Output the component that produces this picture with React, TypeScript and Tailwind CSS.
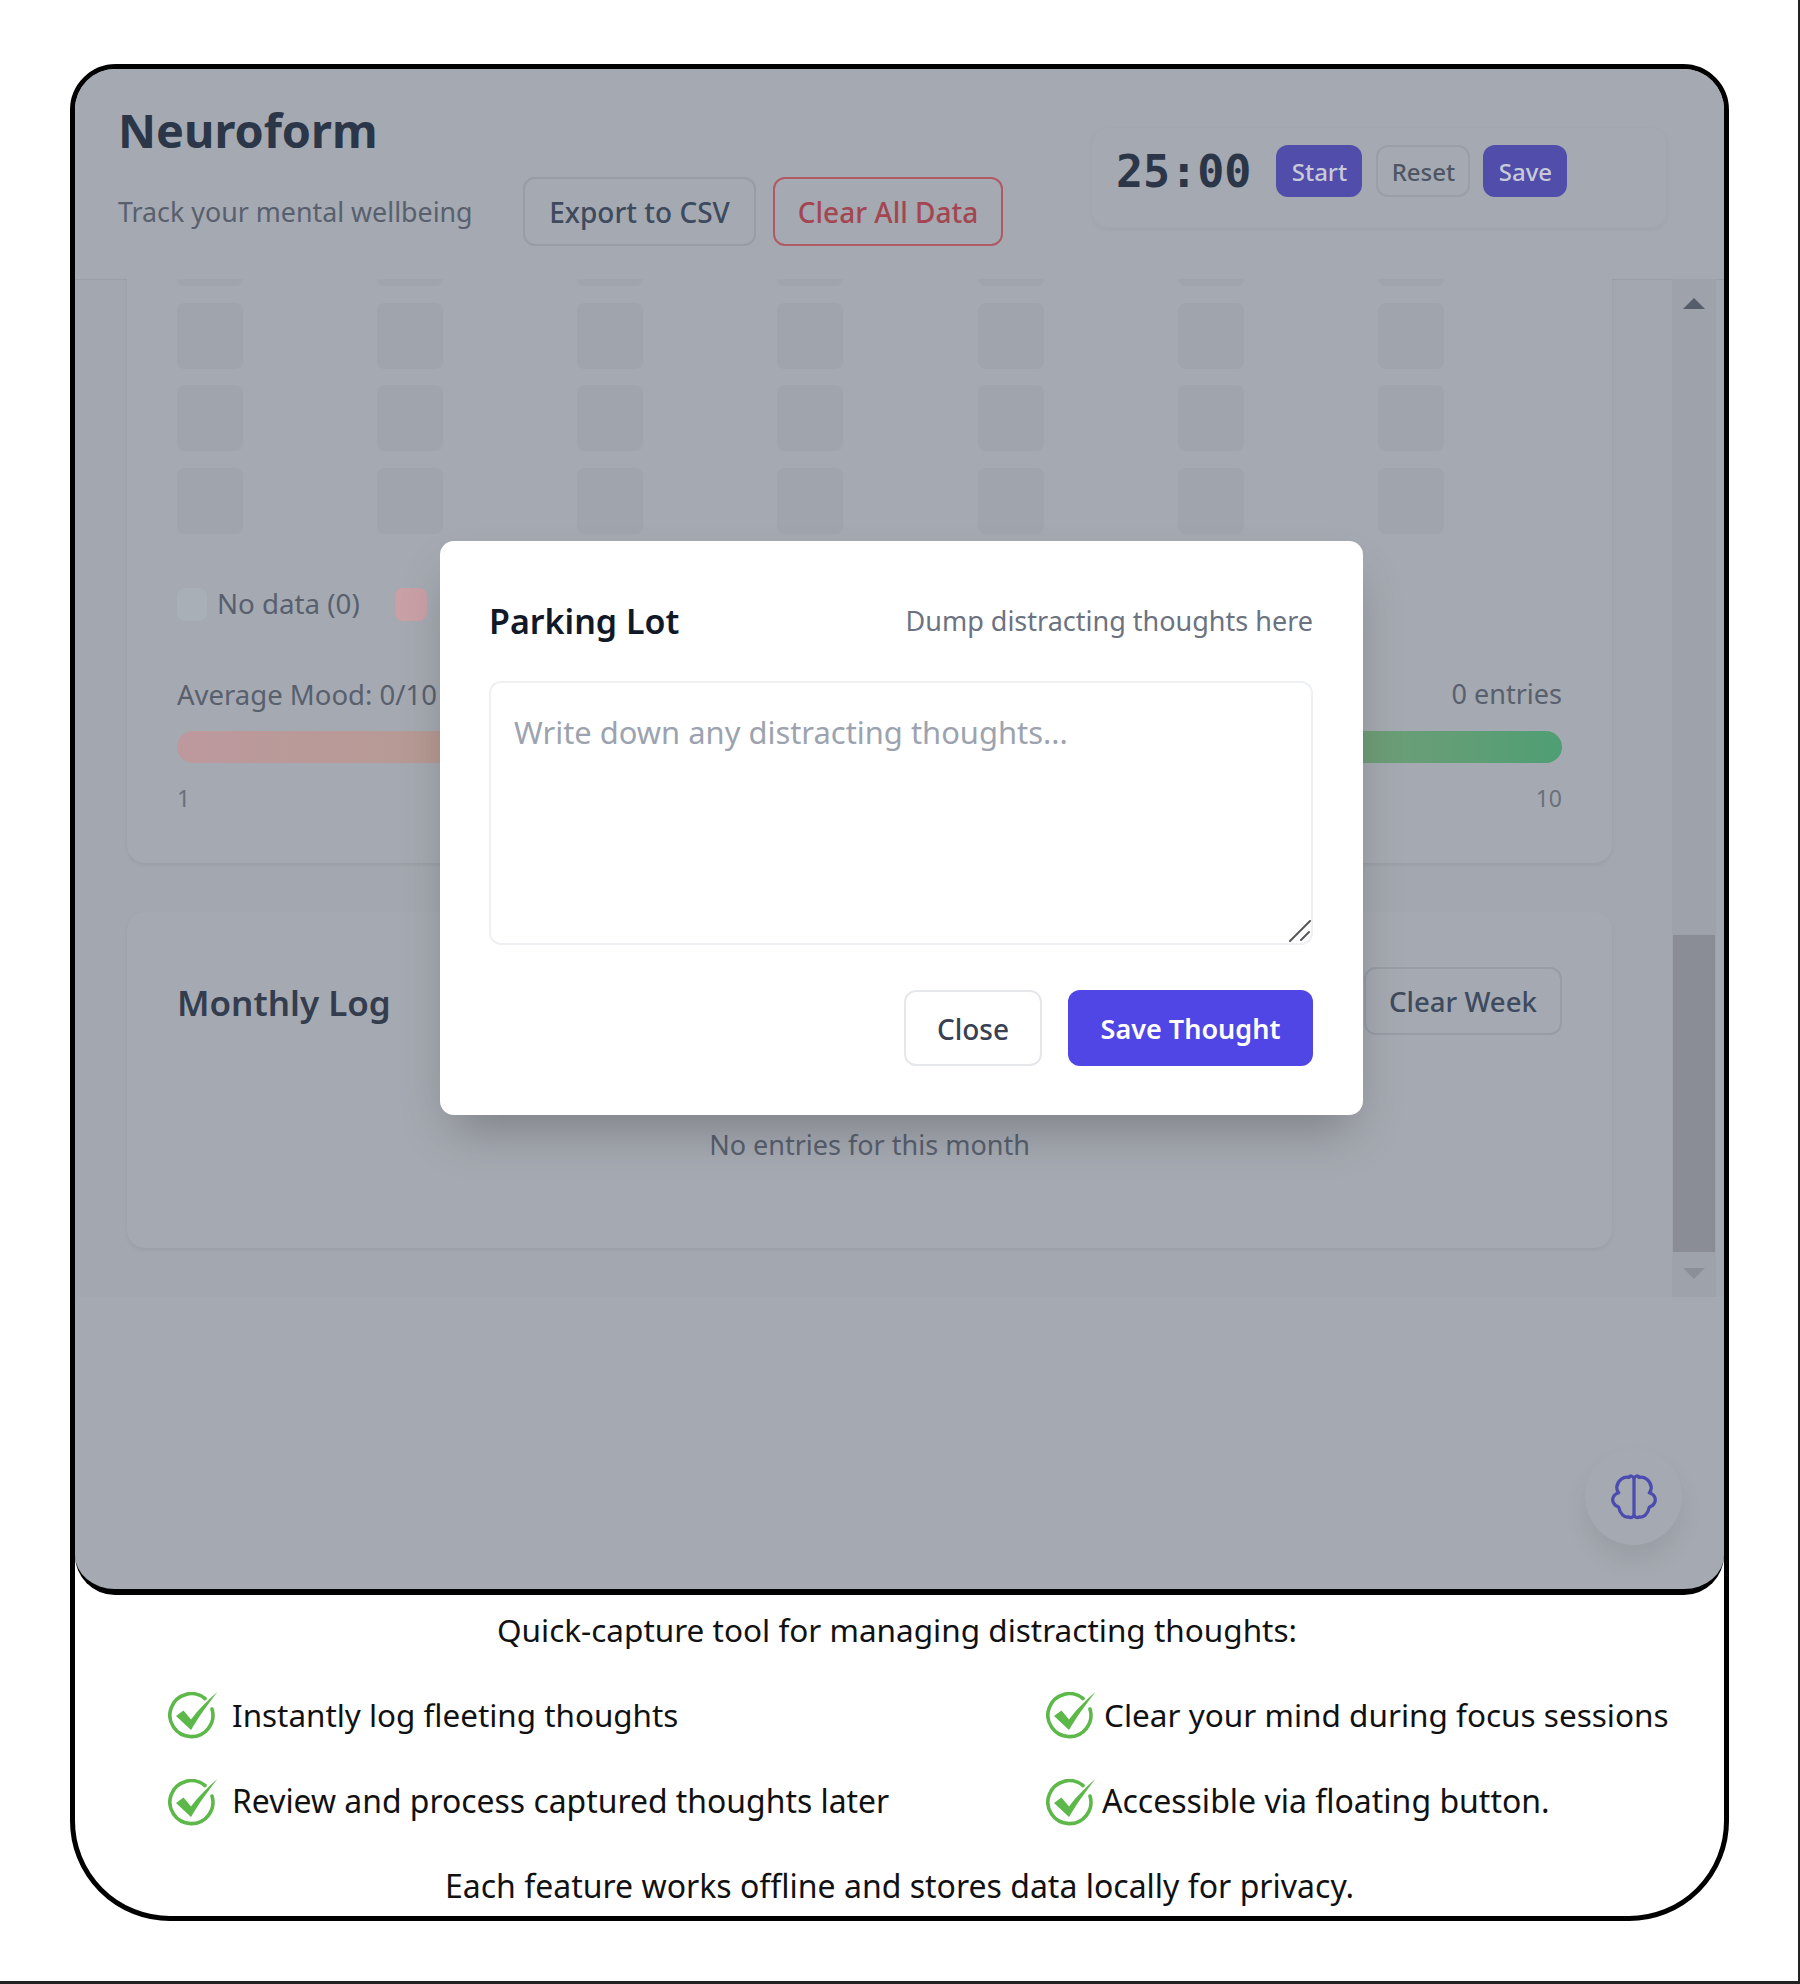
const cells = Array.from({ length: 28 }, (_, i) => i);

function CheckIcon() {
  return (
    <svg viewBox="0 0 50 48" className="h-[48px] w-[50px] shrink-0" fill="none">
      <path d="M37 6.5A21.5 21.5 0 1 0 44 17" stroke="#5cb848" strokeWidth="3.6" strokeLinecap="round" />
      <path d="M8 24L15.5 18.5L23 27.5C30 18 40 8 49.5 0C40 12 30 26 23 38Z" fill="#5cb848" />
    </svg>
  );
}

function BrainIcon() {
  const half = "M12 2.4C11.4 .8 9.8 .6 9.4 1.8C6.6 1 3.4 3.4 3 6.8C2.9 8 3.4 9 4 9.8C1.2 10.6 .4 13 1.2 14.8C1.7 16 2.7 16.9 4 17.2C4.6 20.6 7 23 9.2 22.4C10.6 23.2 11.6 22.4 12 21.4";
  return (
    <svg viewBox="0 0 24 24" className="h-[46px] w-[46px]" fill="none" stroke="#4b4bb0" strokeWidth="1.7" strokeLinejoin="round">
      <path d={half} />
      <path d={half} transform="matrix(-1 0 0 1 24 0)" />
      <path d="M12 2.4V21.4" />
    </svg>
  );
}

function Feature({ text, gap, textClass }: { text: string; gap: string; textClass: string }) {
  return (
    <div className={`flex h-[48px] items-center ${gap}`}>
      <CheckIcon />
      <span className={`leading-[48px] text-[#111] ${textClass}`}>{text}</span>
    </div>
  );
}

export default function App() {
  return (
    <div className="h-[1984px] w-[1800px] overflow-hidden border-r-2 border-b-[3px] border-[#222] bg-white pt-[64px] pl-[70px] font-['Noto_Sans',sans-serif]">
      <div className="h-[1857px] w-[1659px] rounded-t-[46px] rounded-b-[100px] border-[5px] border-black">
        <div className="relative h-[1526px] overflow-hidden rounded-[40px] border-b-[6px] border-black bg-[#a5a9b1]">
          {/* header */}
          <header className="flex h-[210px] justify-between pr-[57px] pl-[43px]">
            <div className="pt-[30px]">
              <h1 className="text-[46.8px] leading-[62px] font-bold text-[#2b3648]">Neuroform</h1>
              <div className="mt-[16px] flex items-center gap-[49px]">
                <p className="w-[356px] pt-[2px] text-[26.8px] whitespace-nowrap text-[#58606e]">Track your mental wellbeing</p>
                <div className="flex gap-[17px]">
                  <button className="h-[69px] w-[233px] rounded-[12px] border-2 border-[#979ca5] pt-[1px] text-[28px] font-medium text-[#3e4a5e]">
                    Export to CSV
                  </button>
                  <button className="h-[69px] w-[230px] rounded-[12px] border-2 border-[#b05a64] pt-[1px] text-[28px] font-medium text-[#a34651]">
                    Clear All Data
                  </button>
                </div>
              </div>
            </div>
            <div className="mt-[58px] flex h-[101px] w-[575px] items-start gap-[25px] rounded-[16px] border border-[#a3a7af] pt-[17px] pl-[23px] shadow-[0_2px_4px_rgba(0,0,0,0.04)]">
              <span className="font-['DejaVu_Sans_Mono',monospace] text-[45px] leading-[54px] font-bold text-[#2b3648]">25:00</span>
              <div className="flex items-center">
                <button className="h-[52px] w-[86px] rounded-[12px] bg-[#504eaa] pt-[2px] text-[24px] font-medium text-[#c8cad6]">Start</button>
                <button className="ml-[14px] h-[52px] w-[94px] rounded-[12px] border-2 border-[#9a9ea8] pt-[2px] text-[24px] font-medium text-[#4e5664]">Reset</button>
                <button className="ml-[13px] h-[52px] w-[84px] rounded-[12px] bg-[#504eaa] pt-[2px] text-[24px] font-medium text-[#c8cad6]">Save</button>
              </div>
            </div>
          </header>

          {/* scrolled content */}
          <div className="flex h-[1018px] bg-[#a3a8b0] shadow-[inset_0_1px_0_rgba(0,0,0,0.05)]">
            <div className="h-full w-[1597px] overflow-hidden pl-[52px]">
              <section className="-mt-[108px] h-[692px] w-[1485px] rounded-[18px] bg-[#a5a9b1] px-[50px] pt-[49px] shadow-[0_2px_4px_rgba(0,0,0,0.06)]">
                <div className="grid grid-cols-7 gap-x-4 gap-y-[16.5px]">
                  {cells.map((cell) => (
                    <div key={cell} className="h-[66px] w-[66px] rounded-[8px] bg-[#a0a5ad]" />
                  ))}
                </div>
                <div className="mt-[54px] flex h-[33px] items-center">
                  <span className="h-[33px] w-[30px] rounded-[8px] bg-[#a8afb6]" />
                  <span className="ml-[10px] text-[27.7px] text-[#58606e]">No data (0)</span>
                  <span className="ml-[35px] h-[33px] w-[32px] rounded-[8px] bg-[#c9a0a6]" />
                </div>
                <div className="mt-[55px] flex h-[38px] items-center justify-between text-[27.5px] text-[#58606e]">
                  <span>Average Mood: 0/10</span>
                  <span className="text-[27px]">0 entries</span>
                </div>
                <div className="mt-[17px] h-[32px] rounded-full bg-gradient-to-r from-[#bd999e] via-[#aa9a80] to-[#4f9e74]" />
                <div className="mt-[20px] flex justify-between text-[23px] leading-[30px] text-[#69707c]">
                  <span>1</span>
                  <span>10</span>
                </div>
              </section>
              <section className="mt-[49px] h-[336px] w-[1485px] rounded-[18px] bg-[#a5a9b1] px-[50px] pt-[54px] shadow-[0_2px_4px_rgba(0,0,0,0.06)]">
                <div className="flex items-center justify-between">
                  <h2 className="pt-[3px] text-[35px] leading-[67px] font-semibold text-[#333d4e]">Monthly Log</h2>
                  <button className="h-[68px] w-[198px] rounded-[12px] border-2 border-[#979ca5] pt-[2px] text-[27.6px] font-medium text-[#3e4a5e]">
                    Clear Week
                  </button>
                </div>
                <p className="mt-[89px] text-center text-[27px] leading-[40px] text-[#58606e]">No entries for this month</p>
              </section>
            </div>
            <div className="flex h-full w-[44px] flex-col items-center justify-between bg-[#9ea3ab]">
              <div className="mt-[19px] h-0 w-0 border-x-[11px] border-b-[11px] border-x-transparent border-b-[#555c6a]" />
              <div className="mb-[18px] h-0 w-0 border-x-[11px] border-t-[11px] border-x-transparent border-t-[#8b8f98]" />
            </div>
            <div className="absolute top-[866px] left-[1598px] h-[317px] w-[42px] bg-[#8a8d95]" />
          </div>

          {/* floating button */}
          <button className="absolute right-[42px] bottom-[44px] flex h-[97px] w-[97px] items-center justify-center rounded-full bg-[#a5a9b1] shadow-[0_15px_25px_rgba(0,0,0,0.07)]">
            <BrainIcon />
          </button>

          {/* parking lot modal */}
          <div className="absolute top-[472px] left-[365px] h-[574px] w-[923px] rounded-[14px] bg-white pt-[47px] pr-[50px] pb-[49px] pl-[49px] shadow-[0_25px_50px_-12px_rgba(0,0,0,0.25)]">
            <div className="flex h-[93px] items-start justify-between">
              <h3 className="text-[34px] leading-[66px] font-semibold text-[#111827]">Parking Lot</h3>
              <span className="text-[27px] leading-[66px] text-[#6b7280]">Dump distracting thoughts here</span>
            </div>
            <div className="relative h-[264px]">
              <textarea
                placeholder="Write down any distracting thoughts..."
                className="h-full w-full resize-none rounded-[12px] border-2 border-[#eef0f3] px-[23px] py-[29px] text-[30.9px] leading-[40px] outline-none placeholder:text-[#9ca3af]"
              />
              <svg viewBox="0 0 24 22" className="absolute right-[1px] bottom-[3px] h-[22px] w-[24px]" stroke="#555" strokeWidth="2" strokeLinecap="round">
                <path d="M2 21L22 1" />
                <path d="M13 20L21 12" />
              </svg>
            </div>
            <div className="mt-[45px] flex justify-end gap-[26px]">
              <button className="h-[76px] w-[138px] rounded-[12px] border-2 border-[#e5e7eb] pt-[2px] text-[28px] font-medium text-[#374151]">Close</button>
              <button className="h-[76px] w-[245px] rounded-[12px] bg-[#4f46e5] pt-[2px] text-[27px] font-semibold text-white">Save Thought</button>
            </div>
          </div>
        </div>

        {/* caption */}
        <div className="pt-[18px] text-[#111]">
          <p className="pr-[5px] text-center text-[31.5px] leading-[34px]">Quick-capture tool for managing distracting thoughts:</p>
          <div className="mt-[45px] grid grid-cols-[878px_1fr] gap-y-[39px] pl-[93px]">
            <Feature text="Instantly log fleeting thoughts" gap="gap-[14px]" textClass="-mt-[2px] text-[31.4px]" />
            <Feature text="Clear your mind during focus sessions" gap="gap-[8px]" textClass="-mt-[2px] text-[31.5px]" />
            <Feature text="Review and process captured thoughts later" gap="gap-[14px]" textClass="-mt-[5px] text-[31.9px]" />
            <Feature text="Accessible via floating button." gap="gap-[6px]" textClass="-mt-[5px] text-[32px]" />
          </div>
          <p className="mt-[42px] text-center text-[32px] leading-[34px]">Each feature works offline and stores data locally for privacy.</p>
        </div>
      </div>
    </div>
  );
}
